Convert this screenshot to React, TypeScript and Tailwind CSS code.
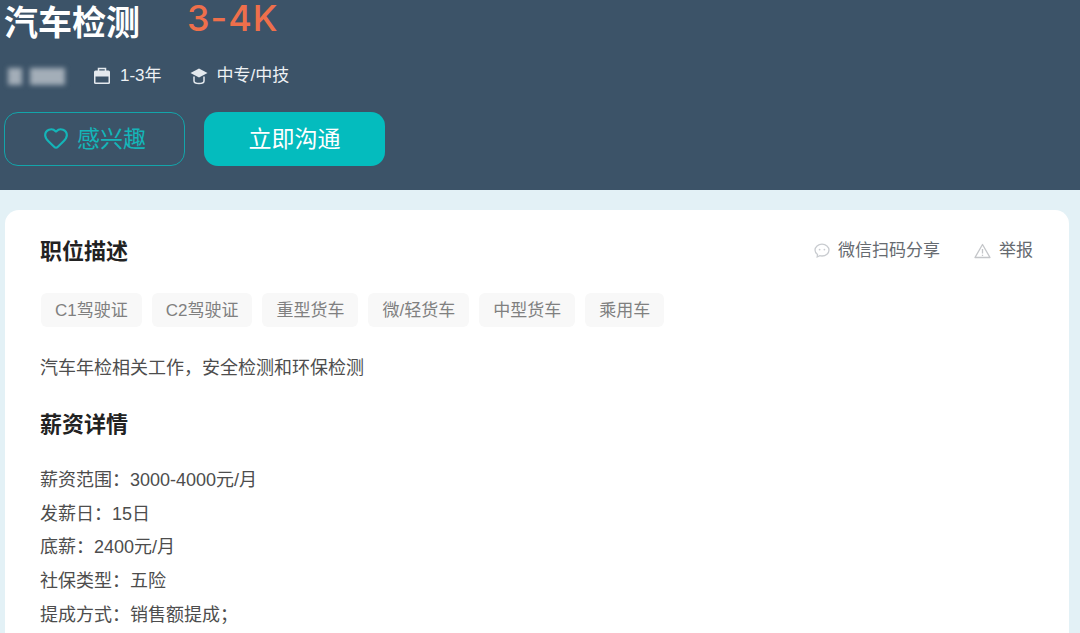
import { Heart } from "lucide-react";

const cjk = "font-['Liberation_Sans','Noto_Sans_CJK_SC',sans-serif]";

const tags = ["C1驾驶证", "C2驾驶证", "重型货车", "微/轻货车", "中型货车", "乘用车"];

const salary = [
  "薪资范围：3000-4000元/月",
  "发薪日：15日",
  "底薪：2400元/月",
  "社保类型：五险",
  "提成方式：销售额提成；",
];

function BriefcaseIcon() {
  return (
    <svg width="18" height="18" viewBox="0 0 18 18" fill="none">
      <path d="M5.500 4V1.500h7V4" stroke="#e4e9ee" strokeWidth="1.500" />
      <rect x="1" y="3.500" width="16" height="13.500" rx="1.500" fill="#e4e9ee" />
      <rect x="2.500" y="9.500" width="13" height="6" fill="#3c5368" />
    </svg>
  );
}

function GradIcon() {
  return (
    <svg width="18" height="18" viewBox="0 0 18 18" fill="none">
      <path d="M9 1.500 17.500 6 9 10.500 .5 6Z" fill="#e4e9ee" />
      <path d="M4 9.500v4.500c0 1.500 2.500 2.500 5 2.500s5-1 5-2.500V9.500" stroke="#e4e9ee" strokeWidth="1.500" />
    </svg>
  );
}

function ChatIcon() {
  return (
    <svg width="16" height="16" viewBox="0 0 16 16" fill="none">
      <path
        d="M8 1.200c-3.900 0-7 2.600-7 5.900 0 1.800 1 3.400 2.500 4.500L3.200 14l2.600-1.300c.7.2 1.400.3 2.200.3 3.900 0 7-2.600 7-5.900S11.900 1.200 8 1.200Z"
        stroke="#c9ccd0"
        strokeWidth="1.300"
      />
      <circle cx="5.600" cy="6.600" r=".9" fill="#c9ccd0" />
      <circle cx="10.400" cy="6.600" r=".9" fill="#c9ccd0" />
    </svg>
  );
}

function WarnIcon() {
  return (
    <svg width="17" height="16" viewBox="0 0 17 16" fill="none">
      <path d="M8.500 1.500 16 14.500H1Z" stroke="#c4c6c9" strokeWidth="1.300" strokeLinejoin="round" />
      <path d="M8.500 6v4.500M8.500 11.700v1.200" stroke="#c4c6c9" strokeWidth="1.300" />
    </svg>
  );
}

export default function App() {
  return (
    <div className={`h-[633px] w-[1080px] overflow-hidden bg-[#e3f1f6] ${cjk}`}>
      <div className="h-[190px] bg-[#3c5368] pl-[4px]">
        <div className="flex h-[47px] items-start">
          <h1 className="mt-[3px] text-[34px] leading-[40px] font-bold text-white">汽车检测</h1>
          <span className="ml-[47px] text-[36px] leading-[36px] font-medium tracking-[1px] text-[#ee6f4b] font-['Inter',sans-serif]">
            3-4K
          </span>
        </div>
        <div className="mt-[14px] flex h-[30px] items-center text-[17px] text-[#eef1f4]">
          <div className="flex w-[89px] items-center gap-[8px] pl-[4px] blur-[2.5px]">
            <span className="h-[17px] w-[14px] bg-[#a3aeb8]" />
            <span className="h-[17px] w-[35px] bg-[#a3aeb8]" />
          </div>
          <div className="flex items-center gap-[9px]">
            <BriefcaseIcon />
            <span>1-3年</span>
          </div>
          <div className="ml-[28px] flex items-center gap-[9px]">
            <GradIcon />
            <span>中专/中技</span>
          </div>
        </div>
        <div className="mt-[21px] flex gap-[19px]">
          <button className="flex h-[54px] w-[181px] items-center justify-center gap-[8px] rounded-[14px] border border-[#13a5aa] text-[23px] text-[#14b5b8]">
            <Heart size={26} strokeWidth={2} className="-mt-[2px]" />
            <span>感兴趣</span>
          </button>
          <button className="h-[54px] w-[181px] rounded-[14px] bg-[#04bcbe] text-[23px] text-white">
            立即沟通
          </button>
        </div>
      </div>
      <div className="ml-[5px] mr-[11px] mt-[20px] h-[500px] rounded-[14px] bg-white pl-[35px] pr-[36px] pt-[27px]">
        <div className="flex items-center justify-between">
          <h2 className="text-[22px] leading-[30px] font-bold text-[#222222]">职位描述</h2>
          <div className="mb-[2px] flex items-center text-[17px] text-[#666a70]">
            <ChatIcon />
            <span className="ml-[8px]">微信扫码分享</span>
            <span className="ml-[34px]">
              <WarnIcon />
            </span>
            <span className="ml-[8px]">举报</span>
          </div>
        </div>
        <div className="ml-[1px] mt-[26px] flex gap-[10px]">
          {tags.map((tag) => (
            <span
              key={tag}
              className="flex h-[34px] items-center rounded-[6px] bg-[#f8f8f8] px-[14px] pt-[2px] text-[17px] text-[#808080]"
            >
              {tag}
            </span>
          ))}
        </div>
        <p className="mt-[26px] text-[18px] leading-[30px] text-[#4d4d4d]">
          汽车年检相关工作，安全检测和环保检测
        </p>
        <h2 className="mt-[27px] text-[22px] leading-[30px] font-bold text-[#222222]">薪资详情</h2>
        <div className="mt-[24px]">
          {salary.map((line) => (
            <p key={line} className="text-[18px] leading-[33.7px] text-[#4d4d4d]">
              {line}
            </p>
          ))}
        </div>
      </div>
    </div>
  );
}
